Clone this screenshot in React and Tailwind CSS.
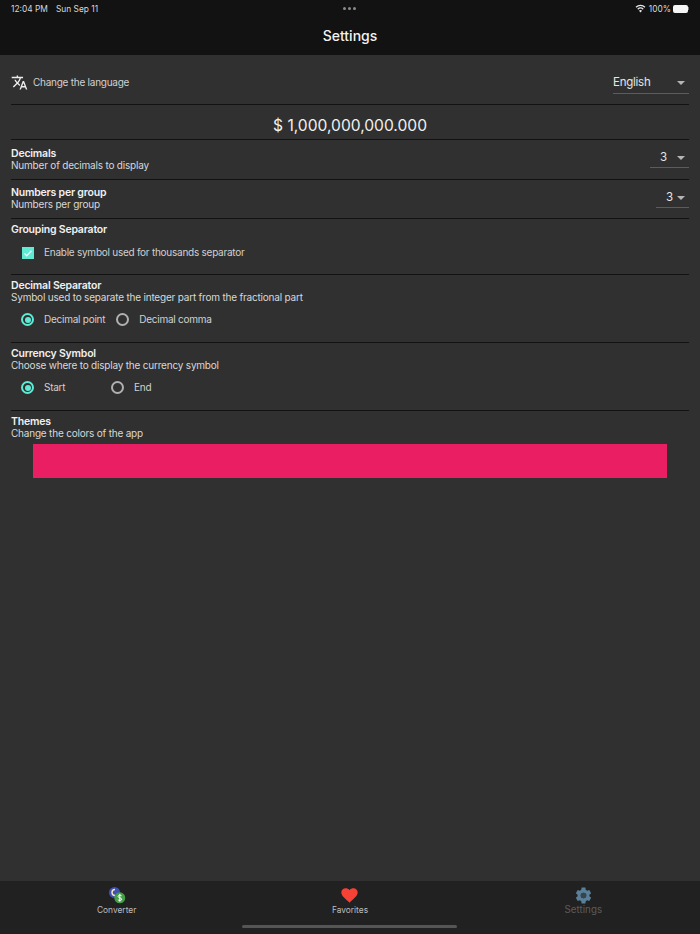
import React from "react";

const Divider = () => <div className="h-px bg-[#121212]" />;

function Dropdown({ value, className }) {
  return (
    <div className={`flex items-center border-b border-[#5c5c5c] pt-[2px] ${className}`}>
      <span className="text-[11.5px] tracking-[-0.25px] text-[#e6e6e6]">{value}</span>
      <span className="ml-auto mr-[4px] h-0 w-0 border-x-[4px] border-t-[4px] border-x-transparent border-t-[#b5b5b5]" />
    </div>
  );
}

function Radio({ checked, label, className }) {
  return (
    <div className={`flex items-center ${className}`}>
      <span
        className={`flex h-[13px] w-[13px] items-center justify-center rounded-full border-2 ${
          checked ? "border-[#5eead4]" : "border-[#b0b0b0]"
        }`}
      >
        {checked && <span className="h-[6px] w-[6px] rounded-full bg-[#5eead4]" />}
      </span>
      <span className="ml-[10px] text-[10px] tracking-[-0.25px] text-[#d0d0d0]">{label}</span>
    </div>
  );
}

function Heading({ title, sub }) {
  return (
    <div>
      <div className="text-[10.5px] font-semibold leading-[12px] tracking-[-0.2px] text-[#f0f0f0]">{title}</div>
      {sub && <div className="text-[10px] leading-[11px] tracking-[-0.2px] text-[#d8d8d8]">{sub}</div>}
    </div>
  );
}

function ConverterIcon() {
  return (
    <svg width="18" height="18" viewBox="0 0 18 18">
      <circle cx="6.5" cy="6.5" r="5.5" fill="#3f51b5" />
      <path d="M7 3.5a3 3 0 0 0 0 6" fill="none" stroke="#f5e9c8" strokeWidth="1.4" />
      <circle cx="11.8" cy="11.8" r="5.5" fill="#43a047" />
      <path d="M13.6 9.8c-.6-.7-3.500-1-3.500.7s3.600 1 3.600 2.700-3 1.400-3.800.6M11.800 7.900v7.800" fill="none" stroke="#fff" strokeWidth="1" />
    </svg>
  );
}

function GearIcon() {
  return (
    <svg width="19" height="19" viewBox="0 0 24 24">
      <path
        fill="#5a8099"
        fillRule="evenodd"
        d="M19.400 13a7.500 7.500 0 0 0 0-2l2.300-1.800-2.400-4.200-2.700 1.100a7.500 7.500 0 0 0-1.700-1L14.400 2H9.600l-.5 3.100a7.500 7.500 0 0 0-1.700 1L4.700 5 2.300 9.200 4.600 11a7.500 7.500 0 0 0 0 2l-2.300 1.800L4.700 19l2.700-1.100c.5.4 1.100.7 1.700 1l.5 3.100h4.800l.5-3.100c.6-.3 1.200-.6 1.700-1l2.700 1.100 2.400-4.200zM12 15.500a3.500 3.500 0 1 1 0-7 3.500 3.500 0 0 1 0 7z"
      />
      <circle cx="12" cy="12" r="3.500" fill="#37454f" />
    </svg>
  );
}

function NavItem({ icon, label, muted }) {
  return (
    <div className="flex w-1/3 flex-col items-center">
      <div className="flex h-[18px] items-center justify-center">{icon}</div>
      <span className={`leading-[11px] ${muted ? "text-[9.8px] text-[#5c5c5c]" : "mt-[1px] text-[8.4px] text-[#bdbdbd]"}`}>
        {label}
      </span>
    </div>
  );
}

export default function App() {
  return (
    <div className="flex h-[934px] w-[700px] flex-col overflow-hidden bg-[#303030] font-['Inter',sans-serif]">
      {/* Top bar */}
      <div className="h-[55px] shrink-0 bg-[#121212]">
        <div className="relative flex h-[17px] items-center px-[11px] pt-[1px] text-[8.4px] text-[#d8d8d8]">
          <span>12:04 PM</span>
          <span className="ml-[8px]">Sun Sep 11</span>
          <div className="absolute left-[343px] top-[7px] flex gap-[2px]">
            <span className="h-[3px] w-[3px] rounded-full bg-[#8a8a8a]" />
            <span className="h-[3px] w-[3px] rounded-full bg-[#8a8a8a]" />
            <span className="h-[3px] w-[3px] rounded-full bg-[#8a8a8a]" />
          </div>
          <div className="ml-auto flex items-center">
            <svg width="11" height="9" viewBox="0 0 22 16" className="mr-[3px]">
              <path d="M11 16l-3-3.500a4.500 4.500 0 0 1 6 0z" fill="#e8e8e8" />
              <path d="M5.500 9.500a8 8 0 0 1 11 0M2 5.500a13 13 0 0 1 18 0" fill="none" stroke="#e8e8e8" strokeWidth="2.400" />
            </svg>
            <span>100%</span>
            <div className="ml-[2px] h-[8px] w-[15px] rounded-[2px] bg-[#f5f5f5]" />
            <div className="h-[3px] w-px bg-[#777]" />
          </div>
        </div>
        <div className="mt-[4px] text-center text-[14px] font-medium leading-[30px] text-[#f2f2f2]">Settings</div>
      </div>

      {/* Settings list */}
      <div className="flex-1 px-[11px]">
        <div className="flex h-[49px] items-center pt-[6px]">
          <svg width="17" height="17" viewBox="0 0 24 24" className="mr-[5px]">
            <path
              fill="#ececec"
              d="M12.870 15.070l-2.540-2.510.03-.03c1.740-1.940 2.980-4.170 3.710-6.530H17V4h-7V2H8v2H1v1.990h11.170C11.500 7.920 10.440 9.750 9 11.350 8.070 10.320 7.300 9.190 6.690 8h-2c.73 1.630 1.730 3.170 2.980 4.560l-5.090 5.020L4 19l5-5 3.110 3.110.76-2.040zM18.500 10h-2L12 22h2l1.120-3h4.750L21 22h2l-4.500-12zm-2.620 7l1.620-4.330L19.120 17h-3.240z"
            />
          </svg>
          <span className="text-[10px] tracking-[-0.25px] text-[#d0d0d0]">Change the language</span>
          <Dropdown value="English" className="ml-auto h-[22px] w-[76px]" />
        </div>
        <Divider />
        <div className="flex h-[34px] items-center justify-center pt-[8px] text-[15.6px] text-[#f0f0f0]">$ 1,000,000,000.000</div>
        <Divider />
        <div className="flex h-[39px] items-start justify-between">
          <div className="pt-[8px]">
            <Heading title="Decimals" sub="Number of decimals to display" />
          </div>
          <Dropdown value="3" className="mt-[7px] h-[21px] w-[39px] pl-[10px]" />
        </div>
        <Divider />
        <div className="flex h-[38px] items-start justify-between">
          <div className="pt-[7px]">
            <Heading title="Numbers per group" sub="Numbers per group" />
          </div>
          <Dropdown value="3" className="mt-[7px] h-[21px] w-[33px] pl-[10px]" />
        </div>
        <Divider />
        <div className="h-[55px] pt-[5px]">
          <Heading title="Grouping Separator" />
          <div className="mt-[9px] flex items-center pl-[11px]">
            <span className="flex h-[12px] w-[12px] items-center justify-center bg-[#5eead4]">
              <svg width="10" height="10" viewBox="0 0 10 10">
                <path d="M1.500 5.500l2.200 2.200 4.800-5" fill="none" stroke="#f5f5f5" strokeWidth="1.300" />
              </svg>
            </span>
            <span className="ml-[10px] text-[10px] tracking-[-0.25px] text-[#d0d0d0]">Enable symbol used for thousands separator</span>
          </div>
        </div>
        <Divider />
        <div className="h-[67px] pt-[5px]">
          <Heading title="Decimal Separator" sub="Symbol used to separate the integer part from the fractional part" />
          <div className="mt-[9px] flex pl-[10px]">
            <Radio checked label="Decimal point" />
            <Radio label="Decimal comma" className="ml-[11px]" />
          </div>
        </div>
        <Divider />
        <div className="h-[67px] pt-[5px]">
          <Heading title="Currency Symbol" sub="Choose where to display the currency symbol" />
          <div className="mt-[9px] flex pl-[10px]">
            <Radio checked label="Start" className="w-[90px]" />
            <Radio label="End" />
          </div>
        </div>
        <Divider />
        <div className="pt-[5px]">
          <Heading title="Themes" sub="Change the colors of the app" />
          <div className="mx-[22px] mt-[5px] h-[34px] bg-[#e91e63]" />
        </div>
      </div>

      {/* Bottom nav */}
      <div className="relative h-[53px] shrink-0 bg-[#212121] pt-[5px]">
        <div className="flex">
          <NavItem icon={<ConverterIcon />} label="Converter" />
          <NavItem
            icon={
              <svg width="17" height="15" viewBox="0 0 24 22">
                <path
                  fill="#f44336"
                  d="M12 21.500l-1.700-1.600C4.300 14.500 0 10.600 0 6.500 0 3 2.800.5 6.300.5c2.200 0 4.300 1 5.700 2.600C13.400 1.500 15.500.5 17.700.5 21.200.5 24 3 24 6.500c0 4.100-4.300 8-10.300 13.400z"
                />
              </svg>
            }
            label="Favorites"
          />
          <NavItem icon={<GearIcon />} label="Settings" muted />
        </div>
        <div className="absolute bottom-[6px] left-[242px] h-[3px] w-[215px] rounded-full bg-[#555555]" />
      </div>
    </div>
  );
}
